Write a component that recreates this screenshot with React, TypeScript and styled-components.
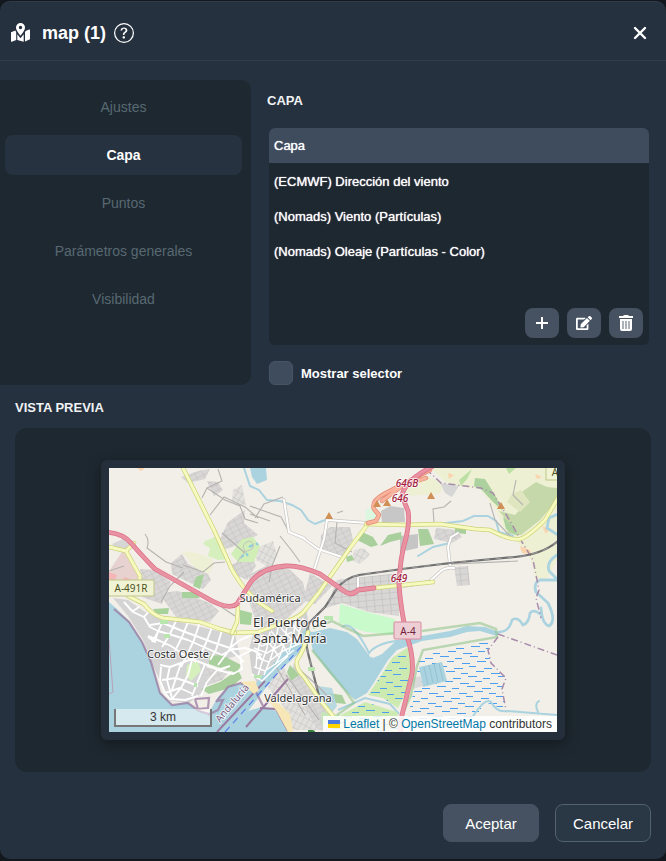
import React, { useState } from "react";
import styled, { createGlobalStyle, css } from "styled-components";
import { FaEdit } from "react-icons/fa";
import { BsQuestionCircle } from "react-icons/bs";

const GlobalStyle = createGlobalStyle`
  * { box-sizing: border-box; }
  body {
    margin: 0;
    background: #12181e;
    color: #fff;
    font-family: "Liberation Sans", Arial, sans-serif;
    font-size: 13px;
  }
  button { font: inherit; color: inherit; border: 0; padding: 0; cursor: pointer; }
`;

const Dialog = styled.section`
  margin: 1px 0 2px;
  background: #26313f;
  border-top: 1px solid #2f3b48;
  border-radius: 10px;
  overflow: hidden;
`;

const Header = styled.header`
  display: flex;
  align-items: center;
  height: 59px;
  padding: 3px 16px 0 11px;
  border-bottom: 1px solid #303c4a;
`;

const Title = styled.h1`
  margin: 0 8px 0 12px;
  font-size: 18px;
  line-height: 24px;
`;

const IconButton = styled.button`
  display: flex;
  align-items: center;
  justify-content: center;
  background: none;
`;

const CloseButton = styled(IconButton)`
  margin-left: auto;
  width: 20px;
  height: 20px;
`;

const Columns = styled.div`
  display: grid;
  grid-template-columns: 251px 1fr;
  padding-top: 19px;
`;

const Sidebar = styled.nav`
  display: flex;
  flex-direction: column;
  gap: 8px;
  padding: 7px 9px 46px 5px;
  height: 305px;
  background: #1e2830;
  border-radius: 0 10px 10px 0;
`;

const Tab = styled.button<{ $active: boolean }>`
  height: 40px;
  border-radius: 8px;
  background: none;
  color: #586972;
  font-size: 14px;
  ${(p) =>
    p.$active &&
    css`
      background: #263240;
      color: #fff;
      font-weight: bold;
    `}
`;

const Content = styled.div`
  padding: 12px 17px 0 16px;
`;

const SectionTitle = styled.h2`
  margin: 0;
  font-size: 13px;
  line-height: 18px;
  color: #f0f2f4;
`;

const LayerArea = styled.div`
  padding-left: 2px;
`;

const LayerBox = styled.div`
  display: flex;
  flex-direction: column;
  height: 217px;
  margin-top: 18px;
  background: #1e2830;
  border-radius: 6px;
  overflow: hidden;
`;

const LayerTable = styled.table`
  width: 100%;
  border-collapse: collapse;
  text-shadow: 0 0 1px #fff;

  th, td {
    height: 35px;
    padding: 0 5px;
    text-align: left;
    font-weight: normal;
  }
  td { padding-top: 1px; }
  th { background: #3e4c5e; }
`;

const Tools = styled.div`
  display: flex;
  justify-content: flex-end;
  gap: 8px;
  margin-top: auto;
  padding: 0 6px 7px;
`;

const Tool = styled(IconButton)`
  width: 34px;
  height: 30px;
  background: #465261;
  border-radius: 8px;
`;

const CheckLabel = styled.label`
  display: flex;
  align-items: center;
  gap: 8px;
  margin-top: 16px;
  font-weight: bold;
`;

const Check = styled.input`
  appearance: none;
  width: 24px;
  height: 24px;
  margin: 0;
  border: 1px solid #465566;
  border-radius: 6px;
  background: #3e4c5e;
  &:checked { background: #7d93ad; }
`;

const PreviewSection = styled.div`
  padding: 14px 15px 0;
`;

const PreviewPanel = styled.div`
  display: flex;
  justify-content: center;
  margin-top: 11px;
  padding: 32px 16px;
  background: #1e2830;
  border-radius: 12px;
`;

const MapFrame = styled.div`
  width: 100%;
  max-width: 464px;
  padding: 8px;
  background: #252e3b;
  border-radius: 6px;
  box-shadow: 0 4px 14px rgba(0, 0, 0, 0.35);
`;

const MapView = styled.div`
  position: relative;
  overflow: hidden;
  font-size: 12px;
  svg.map { display: block; width: 100%; }
`;

const Scale = styled.div`
  position: absolute;
  left: 5px;
  bottom: 5px;
  width: 98px;
  height: 18px;
  line-height: 16px;
  text-align: center;
  color: #333;
  border: 2px solid #777;
  border-top: 0;
  background: rgba(255, 255, 255, 0.5);
`;

const Attribution = styled.div`
  position: absolute;
  right: 0;
  bottom: 0;
  padding: 0 5px;
  line-height: 16px;
  white-space: nowrap;
  color: #333;
  background: rgba(255, 255, 255, 0.85);
  a { color: #0078a8; text-decoration: none; }
`;

const Flag = styled.svg`
  width: 12px;
  height: 8px;
  margin-right: 3px;
`;

const Footer = styled.footer`
  display: flex;
  justify-content: flex-end;
  gap: 16px;
  padding: 32px 15px 17px;
`;

const Action = styled.button<{ $outlined?: boolean }>`
  width: 96px;
  height: 38px;
  border-radius: 8px;
  font-size: 15px;
  background: ${(p) => (p.$outlined ? "#2a3745" : "#465261")};
  border: 1px solid ${(p) => (p.$outlined ? "#52616f" : "#465261")};
`;

const MapIcon = () => (
  <svg width="19" height="19" viewBox="0 0 19 19" fill="#fff" aria-hidden>
    <path fillRule="evenodd" d="M9.5 0A4.5 4.5 0 0 0 5 4.5C5 7.2 8 10.8 9.5 12.8C11 10.8 14 7.2 14 4.5A4.5 4.5 0 0 0 9.5 0ZM9.5 2.8A1.7 1.7 0 1 1 9.5 6.2A1.7 1.7 0 1 1 9.5 2.8Z" />
    <path d="M0 9.2L4.4 7.4L5.2 9.4V17L0.8 18.8Q0 19 0 18.2ZM6.3 11.2L9.5 15.3L12.7 11.2V18.8L6.3 17ZM14 9.2L14.6 8L18.2 6.6Q19 6.4 19 7.2V16.2L14 18.4Z" />
  </svg>
);

type RoadProps = { d: string; fill: string; casing: string; w: number };
const Road = ({ d, fill, casing, w }: RoadProps) => (
  <g fill="none" strokeLinecap="round" strokeLinejoin="round">
    <path d={d} stroke={casing} strokeWidth={w + 1} />
    <path d={d} stroke={fill} strokeWidth={w - 0.4} />
  </g>
);

const pinkRoads = [
  "M105 532Q123 533 131 543Q145 559 155 569L205 597Q228 611 237 604L250 583Q261 568 285 566Q299 565 320 574L344 591Q351 597 358 590L374 588",
  "M433 466Q404 481 402 496L408 511Q410 520 406 538Q400 557 399 585Q401 612 407 636Q414 657 412 674L402 715L400 734",
];
const yellowRoads = [
  "M182 466L214 530L229 563Q232 572 245 589L258 602L272 611",
  "M368 524L350 548L318 594L306 609Q301 617 285 622L258 632L232 633",
  "M366 524L405 525L440 524L475 529L490 530Q511 541 520 539Q528 537 545 520L558 498",
  "M374 588L433 582",
  "M128 596L144 604Q152 615 163 618L200 622L220 629L235 633",
  "M238 607L237 622L232 633",
  "M109 547L126 551L134 543M126 551L140 576L139 586",
  "M308 632Q305 649 297 660Q295 668 304 677L320 700L333 716",
];
const whiteRoads = [
  "M284 500L289 532L303 538L318 549L342 557M327 520L324 539L314 570M289 532L304 538M327 520L368 523",
  "M404 586L429 582L442 570Q449 567 454 568M450 565L448 547L451 537L458 533",
  "M358 578L358 590",
];
const townStreets =
  "M124 602L133 612L144 617L150 627L158 631L155 642L148 637M133 611L139 607M144 617L150 610M148 636L160 641L171 646L184 655L196 662M158 631L172 635L188 640L206 648L222 655L234 648M150 625L163 623L180 630L196 636L212 642L230 648L240 640M164 618L158 632L152 642M176 621L169 636L162 647M188 622L182 637L175 651M200 622L194 640L188 653L181 667M212 627L206 643L200 656M222 630L216 650L210 660M234 634L230 649L218 665M160 665L170 667L181 663L192 659L207 665L218 670L230 666M161 667L160 680L165 693L170 699M170 666L167 680L172 698M181 663L176 678L172 690M192 660L188 675L181 688L172 699M205 664L198 681L192 696M218 669L207 682L201 696M162 680L176 678L188 682L198 686M165 693L180 688L193 694M170 699L185 700L198 696M218 670L233 674L242 669L240 656L252 650L262 655M230 649L244 662M240 640L252 635M229 650L245 648L256 651L262 660";
const centreStreets =
  "M253 640L262 646L276 640L292 632M254 648L267 653L281 645L297 637M256 657L268 662L283 651L301 643M254 667L265 671L281 660L294 650M252 674L262 681L276 667L288 656M262 635L257 654L256 668M270 632L267 648L261 665L257 679M278 628L275 645L270 660L264 675M287 625L285 641L280 656L275 665M296 620L293 637L289 652M303 618L299 633L296 645M263 635L273 648L279 657M271 631L283 645L288 654M281 628L292 640L297 645M290 622L300 633";
const lanes =
  "M109 571L124 566M145 534Q150 540 147 548L166 562L183 568M202 498L207 488L222 481L218 469M207 488L225 500L240 506L245 519L258 523M210 515L224 497L245 507M245 507L258 518M183 565L203 572L214 563L225 562M250 506L281 517L289 532M250 514L270 521M283 497L264 504L255 518M280 536L292 551L300 562M222 533L238 547L245 553M434 522L433 509L444 507L451 501M432 565L518 561M490 503L495 520L510 536M516 480L513 495L523 505M280 546L272 566L269 582M337 522L335 543L352 552M337 513L343 511M220 606L235 616M184 572L170 586L161 602M300 670L318 686L333 702M286 675L303 698L319 720M275 665L290 690L305 715";

const greens: [string, string][] = [
  ["M205 541L215 537L220 546L229 559L218 560L208 556L210 548L203 544Z", "#d6f0bd"],
  ["M231 554L242 539L253 537L260 546L254 562L238 562Z", "#d0eeb5"],
  ["M182 552L197 554L212 565L208 574L196 568Z", "#eef0d5"],
  ["M196 577L204 574L200 589L193 586Z", "#a8d29c"],
  ["M182 592L195 592L200 598L182 598Z", "#a8d29c"],
  ["M153 609L169 608L168 614L156 614Z", "#a8d29c"],
  ["M357 540L362 532L373 537L378 545L371 547Z", "#a8cf9c"],
  ["M380 546L388 535L401 532L402 539L390 542Z", "#a8cf9c"],
  ["M209 656L222 655L241 665L237 673L221 668L209 664Z", "#a8cf9c"],
  ["M201 689L220 682L238 670L242 678L230 688L209 694Z", "#a8cf9c"],
  ["M187 665L198 661L201 671L191 681L186 676Z", "#d6f0bd"],
  ["M240 610L252 613L251 625L240 624Z", "#a8d29c"],
  ["M340 604L370 613L395 619L396 635L366 632L339 623Z", "#c8facc"],
  ["M366 510L375 506L381 520L365 521Z", "#dcf7df"],
  ["M418 529L428 529L434 544L420 546Z", "#a8cf9c"],
  ["M455 528L466 529L466 534L455 533Z", "#a8cf9c"],
  ["M346 557L352 555L354 560L347 562Z", "#a8d29c"],
  ["M328 693L342 695L346 704L336 703Z", "#a8cf9c"],
  ["M290 665L299 675L291 681L287 672Z", "#a8cf9c"],
  ["M321 712L340 715L337 731L322 725Z", "#c5e6b6"],
];

const urban: [string, string][] = [
  ["M109 571L124 549L140 575L138 590L109 590Z", "#e8d2cf"],
  ["M112 544L125 538L132 547L122 553Z", "#d7d6d6"],
  ["M181 477L198 471L210 469L205 479L188 483Z", "url(#blocks)"],
  ["M207 481L218 482L223 490L214 496Z", "url(#blocks)"],
  ["M219 541L228 522L245 510L244 523L258 535L244 542L235 546L226 549Z", "url(#blocks)"],
  ["M230 565L253 557L256 566L247 580L238 576Z", "url(#blocks)"],
  ["M233 490L242 485L246 506L232 501Z", "url(#lightBlocks)"],
  ["M257 548L273 541L277 555L270 568L256 560Z", "url(#lightBlocks)"],
  ["M321 535L330 527L350 527L353 540L343 556L320 551Z", "url(#blocks)"],
  ["M354 550L364 548L370 555L360 564L352 560Z", "url(#lightBlocks)"],
  ["M381 511L390 506L404 508L405 522L382 523Z", "#c8c7c7"],
  ["M400 536L418 534L418 548L400 552Z", "#c5c5c5"],
  ["M436 528L456 530L462 537L452 543L434 539Z", "url(#blocks)"],
  ["M440 483L459 486L452 497L445 493Z", "#d7d6d6"],
  ["M454 567L468 566L470 585L457 586Z", "url(#grid)"],
  ["M140 569L155 570L171 582L162 604L142 597Z", "url(#blocks)"],
  ["M171 563L182 554L188 564L208 574L211 580L203 589L172 574Z", "url(#blocks)"],
  ["M159 593L178 591L210 603L219 611L210 622L176 617Z", "url(#blocks)"],
  ["M113 598L128 600L145 612L184 623L235 635L240 655L207 664L205 690L189 703L170 701L155 670L143 640L128 616Z", "#d5d4d4"],
  ["M206 668L230 670L222 680L205 686Z", "url(#blocks)"],
  ["M249 650L254 631L286 623L306 609L310 630L298 652L258 685L252 673Z", "#d2d1d1"],
  ["M249 575L268 565L287 567L303 582L307 600L282 623L262 630L255 619L249 601Z", "url(#blocks)"],
  ["M310 573L332 586L315 604L303 600Z", "url(#blocks)"],
  ["M337 580L398 573L399 616L369 612L342 603L326 608Z", "url(#grid)"],
  ["M294 663L305 677L322 702L335 720L330 732L304 727L288 690Z", "url(#blocks)"],
  ["M265 684L283 666L299 695L318 730L293 730L283 706Z", "url(#lightBlocks)"],
];

const eastDashes = Array.from({ length: 16 }, (_, r) =>
  Array.from({ length: 8 }, (_, c) => `M${404 + c * 15 + ((r * 7) % 15)} ${641.5 + r * 5 + (c % 2) * 2}h${7 + ((r + c) % 3)}`).join("")
).join("");
const westDashes = Array.from({ length: 14 }, (_, r) =>
  `M${332 + ((r * 7) % 13)} ${650.5 + r * 6}h8m7 2h7m7-2h9m7 2h7m7-2h8`
).join("");

const label = {
  fontFamily: '"Noto Sans", sans-serif',
  fill: "#333",
  stroke: "#fff",
  strokeWidth: 2,
  strokeOpacity: 0.75,
  paintOrder: "stroke" as const,
  strokeLinejoin: "round" as const,
};

const CityMap = () => (
  <svg className="map" viewBox="109 468 448 264" role="img" aria-label="El Puerto de Santa María">
    <defs>
      <pattern id="blocks" width="7" height="5" patternUnits="userSpaceOnUse" patternTransform="rotate(-27)">
        <rect width="7" height="5" fill="#d8d7d6" />
        <path d="M0 0H7M0 0V5" stroke="#c2c1c0" strokeWidth="1" />
      </pattern>
      <pattern id="grid" width="8" height="6" patternUnits="userSpaceOnUse" patternTransform="rotate(-5)">
        <rect width="8" height="6" fill="#d8d7d6" />
        <path d="M0 0H8M0 0V6" stroke="#bdbcbb" strokeWidth="1.2" />
      </pattern>
      <pattern id="lightBlocks" width="5" height="7" patternUnits="userSpaceOnUse" patternTransform="rotate(28)">
        <rect width="5" height="7" fill="#e3e1dd" />
        <path d="M0 0H5M0 0V7" stroke="#c3c2c0" strokeWidth="1" />
      </pattern>
      <clipPath id="marshEast">
        <path d="M420 655L442 650L492 641L488 652L492 665L506 678L502 689L506 710L495 706L485 702L474 720L407 720L414 690Z" />
      </clipPath>
      <clipPath id="marshWest">
        <path d="M408 647L392 658L382 674L368 695L383 698L398 708L407 690L413 667ZM341 715L365 702L397 712L402 732L330 732Z" />
      </clipPath>
    </defs>
    <rect x="109" y="468" width="448" height="264" fill="#f2efe9" />
    <path d="M430 468H557V510L545 526L519 542L505 532L496 510L480 489L449 485Z" fill="#edf0d3" />
    <path d="M517 541L557 515V560L548 578L536 580L531 560Z" fill="#edf0d3" />
    <path d="M408 482L424 475L444 483L440 494L405 496Z" fill="#edf0d3" />
    <path d="M536 482L547 487L557 488V500L540 520L521 535L508 534L504 517L499 511L515 515L525 504L519 494Z" fill="#c5d8aa" />
    <path d="M475 478L485 479L495 495L503 511L493 502L482 490L474 486Z" fill="#add19e" />
    <path d="M503 517L514 527L518 536L506 529Z" fill="#add19e" />
    <path d="M506 468H516L509 474ZM472 469L467 479L461 486L459 480Z" fill="#bce0a4" />
    <path d="M512 494L521 490L530 502L520 512L507 502Z" fill="#dfe6bf" />
    <path d="M520 546L530 550L532 554L522 553ZM448 473L454 475L449 479ZM535 474L542 477L537 479ZM542 526L549 529L546 534ZM137 468L145 468L141 471Z" fill="#fbd3ad" />
    <path d="M183 551L196 553L212 558L214 565L208 576L196 570Z" fill="#eef0d5" />
    {urban.map(([d, fill]) => <path key={d} d={d} fill={fill} />)}
    {greens.map(([d, fill]) => <path key={d} d={d} fill={fill} />)}
    <path d="M109 572l8 3l-3 8h-5zM124 577l6 2l-2 5h-5z" fill="#f4b6b6" />
    <path d="M112 585h6v5h-6zM131 583h5v6h-5z" fill="#b9e3ae" />
    <path d="M240 558l4-3M249 547l4-2M246 553l2 3M256 543l2 2" stroke="#8ccbe0" strokeWidth="2" />
    <path d="M236 564L245 551Q240 544 249 541Q256 543 252 549L245 552" fill="none" stroke="#c5c3c0" />

    <g fill="#aad3df">
      <path d="M109 602L117 609L129 621L142 641L151 661L160 692L172 705L187 702L198 711L208 714L218 697L228 687L241 683L252 688L258 694L250 705L242 713L264 706L276 711L288 732H109Z" />
      <path d="M250 690L285 650L306 628L313 633L307 646L277 673L259 697L236 727L215 732Z" />
      <path d="M309 633L330 628L347 632L357 639L368 654L373 658L382 654L396 641L422 636L450 631L467 626L485 627L499 632L497 636L480 631L467 632L450 637L422 641L397 650L388 660L375 681L367 693L355 700L345 691L327 670L313 651Z" />
      <path d="M250 468H266L267 480L257 484L252 477Z" />
      <path d="M318 686L332 688L337 706L331 714L318 699Z" opacity="0.8" />
    </g>
    <path d="M344 629Q358 627 371 653Q381 639 408 636" fill="none" stroke="#f2efe9" strokeWidth="5" />
    <path d="M342 627Q352 619 369 653Q378 641 408 640M338 710L365 698L390 704L399 714" fill="none" stroke="#aad3df" strokeWidth="2" />
    <path d="M408 647L392 658L382 674L368 695L383 698L398 708L407 690L413 667ZM341 715L365 702L397 712L402 732L330 732Z" fill="#cdebb0" />
    <path d={eastDashes} clipPath="url(#marshEast)" stroke="#4a9ff0" strokeWidth="1" />
    <path d={westDashes} clipPath="url(#marshWest)" stroke="#4a9ff0" strokeWidth="1" />
    <path d="M419 667L442 662L447 681L423 687Z" fill="#aad3df" />
    <path d="M424 667l4 18M429 665l4 18M434 664l4 18M439 663l4 18" stroke="#93c3d2" />
    <path d="M413 678L420 676L423 686L413 689Z" fill="#d9d9d9" />
    <path d="M312 650L345 690L354 703L337 715M422 631L480 623L496 629L497 637L423 650L417 666L411 695L402 715M313 628L332 621L363 636L398 633" fill="none" stroke="#8dc184" strokeOpacity="0.55" strokeWidth="2.5" />
    <g fill="none" stroke="#aad3df" strokeLinecap="round">
      <path d="M244 468L250 486L259 490L267 500L280 501L292 505L301 510L308 520L315 524L325 520L368 523" strokeWidth="2" />
      <path d="M438 524L463 521L474 516H488L496 521L499 532L513 536M418 556L433 547L450 543" strokeWidth="2" />
      <path d="M558 514L549 518L547 528L558 535M557 555Q546 562 549 571L558 580L540 580Q533 583 536 592L548 603Q557 621 549 626Q542 624 541 608" strokeWidth="2.8" />
      <path d="M499 632Q509 632 512 620Q518 616 523 625Q529 623 530 613Q534 609 540 614" strokeWidth="2.6" />
      <path d="M472 718Q485 697 491 702Q497 713 507 711L557 715M538 712Q534 704 539 701" strokeWidth="2" />
    </g>
    <path d={lanes} fill="none" stroke="#b5b3b0" strokeWidth="1.1" />
    <path d={townStreets} fill="none" stroke="#fff" strokeWidth="1.9" strokeLinejoin="round" />
    <path d={centreStreets} fill="none" stroke="#fff" strokeWidth="1.5" />
    {whiteRoads.map((d) => <Road key={d} d={d} fill="#fff" casing="#c9c6c2" w={2.4} />)}
    <path d="M114 609L129 622L142 642L151 662L160 693L172 705L188 703L199 711L209 714M216 702L228 687L241 683L256 692L263 706M195 699L209 698L208 708L198 709L195 699M217 701L223 700L218 710L208 715" fill="none" stroke="#9b7aa0" strokeOpacity="0.75" strokeWidth="2.2" />
    <path d="M217 732L265 681M246 727L288 679M260 708L276 709L288 731" fill="none" stroke="#9b7aa0" strokeWidth="2" />
    <path d="M225 732L307 640" stroke="#5d7de8" strokeWidth="1.2" strokeDasharray="7 5" />
    <path d="M241 682L255 681L259 690L254 694ZM264 696L276 701L290 714L293 732H288L276 710Z" fill="#f8e7b6" />
    <path d="M109 640L113 692L109 694" fill="none" stroke="#b6a2b5" />
    <path d="M426 469L441 483L481 488L493 493L510 521L522 542L533 560L539 590L536 598L541 618M498 634L557 655M498 637L488 650L491 663L506 678L502 689L506 710" fill="none" stroke="#a98bab" strokeWidth="1.5" strokeDasharray="7 3 1 3" />
    <path d="M558 541Q543 554 515 557L450 563L402 569L359 575Q344 578 336 590L325 607L309 623Q304 638 308 653L320 700L334 718" fill="none" stroke="#707070" strokeWidth="2.2" />
    <path d="M558 541Q543 554 515 557L450 563L402 569L359 575Q344 578 336 590L325 607L309 623Q304 638 308 653L320 700L334 718" fill="none" stroke="#aaa" strokeWidth="0.8" strokeDasharray="6 6" />
    {yellowRoads.map((d) => <Road key={d} d={d} fill="#f7fabf" casing="#cdd279" w={3.4} />)}
    <Road d="M430 470L405 483L384 494Q371 501 374 509L379 515L376 521L368 523M426 478L402 486L382 501" fill="#f9b29c" casing="#e28a72" w={3.4} />
    {pinkRoads.map((d) => <Road key={d} d={d} fill="#e892a2" casing="#dc6f89" w={3.8} />)}
    <path fill="#d08f55" d="M329 512L333 519H325ZM377 500L381 507H373ZM387 499L391 506H383ZM431 492L435 499H427ZM501 502L505 509H497Z" />
    <path fill="#b8e6ae" d="M160 620h8v4h-8zM164 634h6v4h-6zM194 683h3v4h-3zM254 675h8v3h-8zM308 667h7v4h-7zM324 616h9v4h-9z" />

    <g {...label} fontSize="11" textAnchor="middle">
      <text x="270" y="602">Sudamérica</text>
      <text x="178" y="658">Costa Oeste</text>
      <text x="298" y="702">Valdelagrana</text>
      <text x="290" y="627" fontSize="13">El Puerto de</text>
      <text x="290" y="643" fontSize="13">Santa María</text>
    </g>
    <path d="M309 732V731H312Q314 731 314 732" fill="none" stroke="#36803a" strokeWidth="2" />
    <text {...label} fill="#7b5a82" fontSize="10" transform="translate(220 723) rotate(-50)">Andalucía</text>
    <g {...label} fill="#a01a3d" fontSize="10" fontStyle="italic" fontWeight="500" textAnchor="middle">
      <text x="407" y="487">646B</text>
      <text x="400" y="502">646</text>
      <text x="399" y="582">649</text>
    </g>
    <g fontFamily='"Noto Sans", sans-serif' fontSize="10" textAnchor="middle">
      <rect x="106" y="580" width="48" height="16" rx="1" fill="#f1f3d5" stroke="#bfc58a" />
      <text x="131" y="592" fill="#4c5224">A-491R</text>
      <rect x="394" y="622" width="27" height="17" rx="1" fill="#edced4" stroke="#d68a9d" />
      <text x="408" y="635" fill="#70203a">A-4</text>
      <rect x="546" y="462" width="20" height="18" fill="#f1f3d5" stroke="#bfc58a" />
      <text x="555" y="476" fill="#4c5224">A</text>
    </g>
  </svg>
);

const tabs = ["Ajustes", "Capa", "Puntos", "Parámetros generales", "Visibilidad"];
const layers = ["(ECMWF) Dirección del viento", "(Nomads) Viento (Partículas)", "(Nomads) Oleaje (Partículas - Color)"];

export default function App() {
  const [active, setActive] = useState("Capa");
  return (
    <>
      <GlobalStyle />
      <Dialog role="dialog" aria-labelledby="dialog-title">
        <Header>
          <MapIcon />
          <Title id="dialog-title">map (1)</Title>
          <IconButton aria-label="Ayuda"><BsQuestionCircle size={20} /></IconButton>
          <CloseButton aria-label="Cerrar">
            <svg width="14" height="14" viewBox="0 0 14 14" stroke="#fff" strokeWidth="2.4" strokeLinecap="round">
              <path d="M2 2L12 12M12 2L2 12" />
            </svg>
          </CloseButton>
        </Header>
        <Columns>
          <Sidebar>
            {tabs.map((t) => (
              <Tab key={t} $active={t === active} onClick={() => setActive(t)}>{t}</Tab>
            ))}
          </Sidebar>
          <Content>
            <SectionTitle>CAPA</SectionTitle>
            <LayerArea>
              <LayerBox>
                <LayerTable>
                  <thead><tr><th scope="col">Capa</th></tr></thead>
                  <tbody>{layers.map((l) => <tr key={l}><td>{l}</td></tr>)}</tbody>
                </LayerTable>
                <Tools>
                  <Tool aria-label="Añadir">
                    <svg width="12" height="12" viewBox="0 0 12 12" stroke="#fff" strokeWidth="2"><path d="M6 0V12M0 6H12" /></svg>
                  </Tool>
                  <Tool aria-label="Editar"><FaEdit size={16} /></Tool>
                  <Tool aria-label="Eliminar">
                    <svg width="14" height="16" viewBox="0 0 14 16">
                      <path d="M0 1H4L5 0H9L10 1H14V3H0ZM1 4H13V14Q13 16 11 16H3Q1 16 1 14Z" fill="#fff" />
                      <path d="M4 6V14M7 6V14M10 6V14" stroke="#8b939d" strokeWidth="1.4" />
                    </svg>
                  </Tool>
                </Tools>
              </LayerBox>
              <CheckLabel><Check type="checkbox" />Mostrar selector</CheckLabel>
            </LayerArea>
          </Content>
        </Columns>
        <PreviewSection>
          <SectionTitle>VISTA PREVIA</SectionTitle>
          <PreviewPanel>
            <MapFrame>
              <MapView>
                <CityMap />
                <Scale>3 km</Scale>
                <Attribution>
                  <Flag viewBox="0 0 12 8" aria-hidden>
                    <path fill="#4c7be1" d="M0 0h12v4H0z" />
                    <path fill="#ffd500" d="M0 4h12v4H0z" />
                  </Flag>
                  <a href="#leaflet">Leaflet</a> | © <a href="#osm">OpenStreetMap</a> contributors
                </Attribution>
              </MapView>
            </MapFrame>
          </PreviewPanel>
        </PreviewSection>
        <Footer>
          <Action>Aceptar</Action>
          <Action $outlined>Cancelar</Action>
        </Footer>
      </Dialog>
    </>
  );
}
